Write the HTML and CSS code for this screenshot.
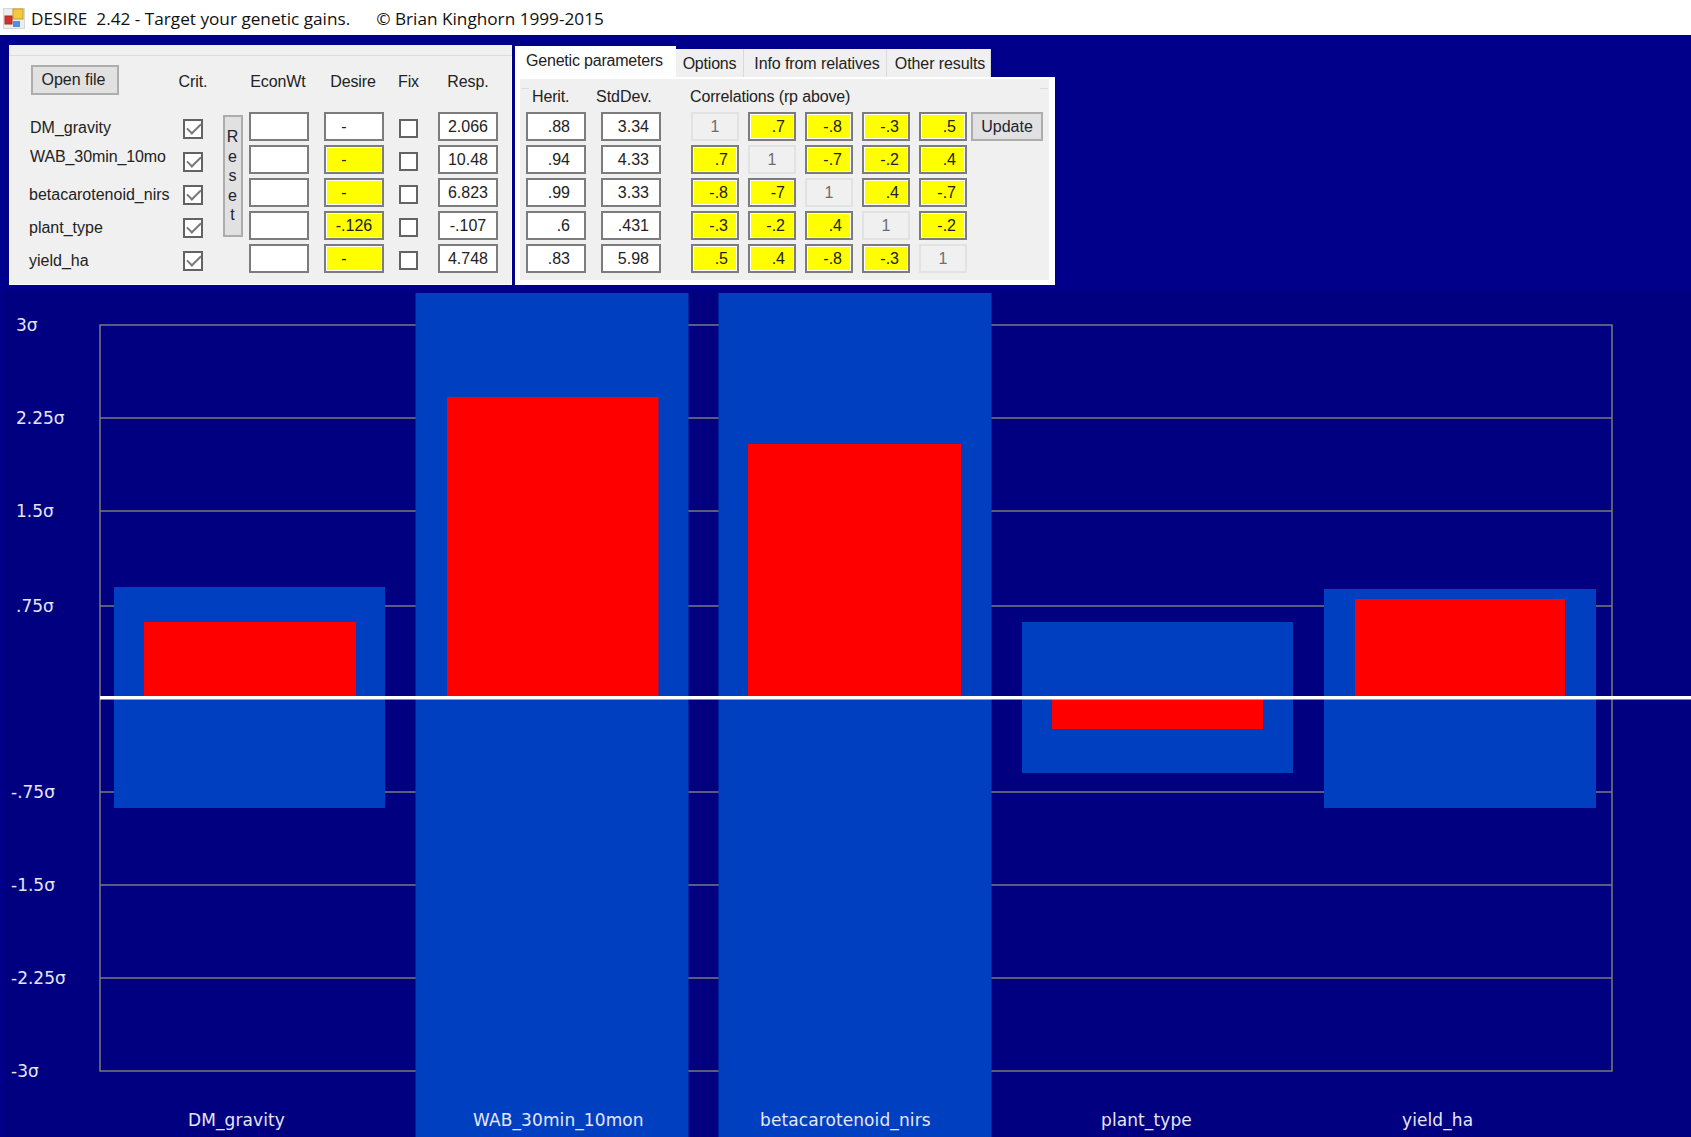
FILE: index.html
```html
<!DOCTYPE html>
<html>
<head lang="en">
    <meta charset="UTF-8">
    <title>DESIRE 2.42</title>
    <link rel="stylesheet" href="styles.css">
</head>
<body>
<header class="titlebar">
    <svg class="app-icon" width="22" height="21" viewBox="0 0 22 21">
        <rect x="0" y="0" width="22" height="21" fill="#d4d6d8"/>
        <rect x="1" y="1" width="20" height="19" fill="#eceded"/>
        <rect x="10" y="1" width="10" height="10" fill="#f3c93f" stroke="#c99a1e"/>
        <rect x="2" y="8" width="7" height="8" fill="#d2322a" stroke="#a82a24"/>
        <rect x="10" y="13" width="7" height="6" fill="#4f8fe6"/>
    </svg>
    <span class="app-name">DESIRE&nbsp; 2.42 - Target your genetic gains.</span>
    <span class="app-copy">© Brian Kinghorn 1999-2015</span>
</header>

<section class="controls">
    <div class="panel">
        <div class="trait-grid">
            <div class="btn btn-open">Open file</div>
            <div class="head c-crit">Crit.</div>
            <div class="head c-econ">EconWt</div>
            <div class="head c-desire">Desire</div>
            <div class="head c-fix">Fix</div>
            <div class="head c-resp">Resp.</div>

            <div class="btn btn-reset">R<br>e<br>s<br>e<br>t</div>

            <!-- traits -->
            <div class="trait trait-first">DM_gravity</div>
            <div class="check on c-crit"></div>
            <div class="field c-econ"></div>
            <div class="field c-desire dash">-</div>
            <div class="check c-fix"></div>
            <div class="field c-resp">2.066</div>

            <div class="trait trait-high">WAB_30min_10mo</div>
            <div class="check on c-crit"></div>
            <div class="field c-econ"></div>
            <div class="field hot c-desire dash">-</div>
            <div class="check c-fix"></div>
            <div class="field c-resp">10.48</div>

            <div class="trait">betacarotenoid_nirs</div>
            <div class="check on c-crit"></div>
            <div class="field c-econ"></div>
            <div class="field hot c-desire dash">-</div>
            <div class="check c-fix"></div>
            <div class="field c-resp">6.823</div>

            <div class="trait">plant_type</div>
            <div class="check on c-crit"></div>
            <div class="field c-econ"></div>
            <div class="field hot c-desire">-.126</div>
            <div class="check c-fix"></div>
            <div class="field c-resp">-.107</div>

            <div class="trait">yield_ha</div>
            <div class="check on c-crit"></div>
            <div class="field c-econ"></div>
            <div class="field hot c-desire dash">-</div>
            <div class="check c-fix"></div>
            <div class="field c-resp">4.748</div>
        </div>
    </div>

    <div class="tabset">
        <div class="tabstrip">
            <div class="tab tab-active">Genetic parameters</div>
            <div class="tab tab-options">Options</div>
            <div class="tab tab-info">Info from relatives</div>
            <div class="tab tab-other">Other results</div>
        </div>
        <div class="tabpage">
            <div class="group">
                <div class="group-heads">
                    <span class="head-herit">Herit.</span>
                    <span class="head-std">StdDev.</span>
                    <span>Correlations (rp above)</span>
                </div>
                <div class="group-body">
                    <div class="param-grid">
                        <div class="field num-h">.88</div><div class="field num-s">3.34</div>
                        <div class="field num-h">.94</div><div class="field num-s">4.33</div>
                        <div class="field num-h">.99</div><div class="field num-s">3.33</div>
                        <div class="field num-h">.6</div><div class="field num-s">.431</div>
                        <div class="field num-h">.83</div><div class="field num-s">5.98</div>
                    </div>
                    <div class="corr-grid">
                        <div class="field unit">1</div>
                        <div class="field hot num-c">.7</div>
                        <div class="field hot num-c">-.8</div>
                        <div class="field hot num-c">-.3</div>
                        <div class="field hot num-c">.5</div>

                        <div class="field hot num-c">.7</div>
                        <div class="field unit">1</div>
                        <div class="field hot num-c">-.7</div>
                        <div class="field hot num-c">-.2</div>
                        <div class="field hot num-c">.4</div>

                        <div class="field hot num-c">-.8</div>
                        <div class="field hot num-c">-7</div>
                        <div class="field unit">1</div>
                        <div class="field hot num-c">.4</div>
                        <div class="field hot num-c">-.7</div>

                        <div class="field hot num-c">-.3</div>
                        <div class="field hot num-c">-.2</div>
                        <div class="field hot num-c">.4</div>
                        <div class="field unit">1</div>
                        <div class="field hot num-c">-.2</div>

                        <div class="field hot num-c">.5</div>
                        <div class="field hot num-c">.4</div>
                        <div class="field hot num-c">-.8</div>
                        <div class="field hot num-c">-.3</div>
                        <div class="field unit">1</div>
                    </div>
                    <div class="btn btn-update">Update</div>
                </div>
            </div>
        </div>
    </div>
</section>

<!-- viewBox uses page coordinates so the numbers read straight off the screen -->
<svg class="chart" width="1688" height="847" viewBox="3 290 1688 847">
    <g class="grid">
        <rect x="100" y="325" width="1512" height="746"/>
        <line x1="100" y1="418" x2="1612" y2="418"/>
        <line x1="100" y1="511" x2="1612" y2="511"/>
        <line x1="100" y1="606" x2="1612" y2="606"/>
        <line x1="100" y1="792" x2="1612" y2="792"/>
        <line x1="100" y1="885" x2="1612" y2="885"/>
        <line x1="100" y1="978" x2="1612" y2="978"/>
    </g>
    <g class="sd">
        <rect x="114" y="587" width="271" height="221"/>
        <rect x="415.5" y="293" width="273" height="844"/>
        <rect x="718.5" y="293" width="273" height="844"/>
        <rect x="1022" y="622" width="271" height="151"/>
        <rect x="1324" y="589" width="272" height="219"/>
    </g>
    <g class="resp">
        <rect x="144" y="622" width="212" height="75"/>
        <rect x="447" y="397" width="211.5" height="300"/>
        <rect x="748" y="444" width="213" height="253"/>
        <rect x="1052" y="698" width="211" height="31"/>
        <rect x="1355" y="599" width="210" height="98"/>
    </g>
    <rect class="zero" x="100" y="696" width="1591" height="3.5"/>
    <g class="axis">
        <text x="16" y="331">3σ</text>
        <text x="16" y="424">2.25σ</text>
        <text x="16" y="517">1.5σ</text>
        <text x="16" y="612">.75σ</text>
        <text x="11" y="798">-.75σ</text>
        <text x="11" y="891">-1.5σ</text>
        <text x="11" y="984">-2.25σ</text>
        <text x="11" y="1077">-3σ</text>
    </g>
    <g class="names">
        <text x="188" y="1126">DM_gravity</text>
        <text x="473" y="1126">WAB_30min_10mon</text>
        <text x="760" y="1126">betacarotenoid_nirs</text>
        <text x="1101" y="1126">plant_type</text>
        <text x="1402" y="1126">yield_ha</text>
    </g>
</svg>
</body>
</html>
```

FILE: styles.css
```css
* { margin: 0; padding: 0; box-sizing: border-box; }
body {
    width: 1691px;
    height: 1137px;
    overflow: hidden;
    background-color: #00008b;
    font-family: "Liberation Sans", Arial, sans-serif;
    font-size: 16px;
    color: #222;
}

/* title bar */
.titlebar {
    height: 35px;
    background-color: #fff;
    display: flex;
    align-items: center;
    padding: 1px 0 0 3px;
    font-family: "Open Sans", sans-serif;
    font-size: 17.2px;
    color: #111;
    white-space: nowrap;
}
.app-icon { margin-right: 6px; }
.app-copy { margin-left: 26px; }

/* top controls */
.controls {
    height: 255px;
    display: flex;
    align-items: flex-start;
    gap: 3px;
    padding: 10px 0 0 9px;
}
.panel {
    width: 503px;
    height: 240px;
    background-color: #f0f0f0;
    border-top: 10px solid #f0f0f0;
    box-shadow: inset 0 0 0 1px #fafafa;
    padding: 10px 0 0 20px;
    position: relative;
}
.panel::before {
    content: "";
    position: absolute;
    left: 0;
    right: 0;
    top: 0;
    height: 1px;
    background-color: #dcdcdc;
}
.trait-grid {
    display: grid;
    grid-template-columns: 154px 20px 20px 20px 6px 60px 15px 60px 15px 19px 20px 60px;
    grid-template-rows: 47px repeat(5, 33px);
}
.c-crit { grid-column: 2; }
.c-econ { grid-column: 6; }
.c-desire { grid-column: 8; }
.c-fix { grid-column: 10; }
.c-resp { grid-column: 12; }

.head {
    justify-self: center;
    white-space: nowrap;
    line-height: 33px;
    letter-spacing: -0.1px;
}
.head.c-econ { margin-right: 2px; }
.head.c-desire { margin-right: 2px; }
.trait {
    grid-column: 1;
    padding-top: 8px;
    line-height: 18px;
    white-space: nowrap;
}
.trait-first { padding-top: 7px; padding-left: 1px; }
.trait-high { padding-top: 3px; padding-left: 1px; letter-spacing: -0.1px; }

.btn {
    background-color: #e1e1e1;
    border: 2px solid #adadad;
    display: flex;
    align-items: center;
    justify-content: center;
    white-space: nowrap;
}
.btn-open {
    grid-column: 1;
    width: 88px;
    height: 30px;
    margin-left: 2px;
    padding-right: 3px;
}
.btn-reset {
    grid-column: 4;
    grid-row: 2 / span 4;
    margin: 3px 0 7px;
    padding-right: 1px;
    line-height: 19.5px;
    text-align: center;
    color: #223;
}

.field {
    height: 29px;
    background-color: #fff;
    border: 2px solid #7c7c7c;
    display: flex;
    align-items: center;
    justify-content: center;
    line-height: 1;
}
.hot {
    background-color: #ff0;
    box-shadow: inset 0 0 0 1px #fff;
}
.dash { padding-right: 20px; }
.unit {
    background-color: #f0f0f0;
    border-color: #e2e2e2;
    color: #6d6d6d;
}
.num-h { justify-content: flex-end; padding-right: 14px; }
.num-s { justify-content: flex-end; padding-right: 10px; }
.num-c { justify-content: flex-end; padding-right: 9px; }

.check {
    width: 20px;
    height: 20px;
    margin-top: 7px;
    background-color: #fff;
    border: 2px solid #636363;
    position: relative;
}
.check.c-fix { width: 19px; height: 19px; }
.check.on::after {
    content: "";
    position: absolute;
    left: 2px;
    top: 2px;
    width: 12px;
    height: 6px;
    border-left: 2px solid #7a7a7a;
    border-bottom: 2px solid #7a7a7a;
    transform: rotate(-45deg);
}

/* tabs */
.tabset { width: 540px; margin-top: 1px; }
.tabstrip {
    height: 31px;
    display: flex;
    align-items: flex-end;
    white-space: nowrap;
}
.tab {
    height: 28px;
    background-color: #f0f0f0;
    border-right: 1px solid #d9d9d9;
    line-height: 29px;
    text-align: center;
}
.tab-active {
    width: 161px;
    height: 31px;
    line-height: 29px;
    background-color: #fff;
    border-right: 0;
    text-align: left;
    padding-left: 11px;
    letter-spacing: -0.2px;
}
.tab-options { width: 68px; letter-spacing: -0.2px; }
.tab-info { width: 143px; padding-left: 4px; letter-spacing: -0.1px; }
.tab-other { width: 104px; padding-left: 3px; letter-spacing: -0.1px; }
.tabpage {
    height: 208px;
    background-color: #fff;
    padding: 2px 6px 5px 5px;
}
.group {
    height: 201px;
    background-color: #f0f0f0;
    padding: 8px 0 0 6px;
    position: relative;
}
.group::before,
.group::after {
    content: "";
    position: absolute;
    top: 9px;
    width: 8px;
    height: 1px;
    background-color: #dcdcdc;
}
.group::before { left: 1px; }
.group::after { right: 1px; }
.group-heads {
    height: 25px;
    display: flex;
    line-height: 19px;
    letter-spacing: -0.15px;
    white-space: nowrap;
}
.head-herit { width: 70px; padding-left: 6px; }
.head-std { width: 94px; letter-spacing: 0; }
.group-body { display: flex; align-items: flex-start; }
.param-grid {
    display: grid;
    grid-template-columns: 60px 60px;
    grid-auto-rows: 33px;
    column-gap: 15px;
    margin-right: 30px;
}
.corr-grid {
    display: grid;
    grid-template-columns: repeat(5, 48px);
    grid-auto-rows: 33px;
    column-gap: 9px;
    margin-right: 4px;
}
.btn-update { width: 72px; height: 29px; color: #223; }

/* chart */
.chart { display: block; margin-left: 3px; background-color: #000080; }
.grid rect, .grid line { fill: none; stroke: #7a7a7a; stroke-width: 1.5; }
.sd rect { fill: #0040c0; }
.resp rect { fill: #f00; }
.zero { fill: #fff; }
.axis text, .names text {
    font-family: "DejaVu Sans", Verdana, sans-serif;
    font-size: 17px;
    fill: #e6e6f6;
}
.names text { letter-spacing: 0.1px; }
```
